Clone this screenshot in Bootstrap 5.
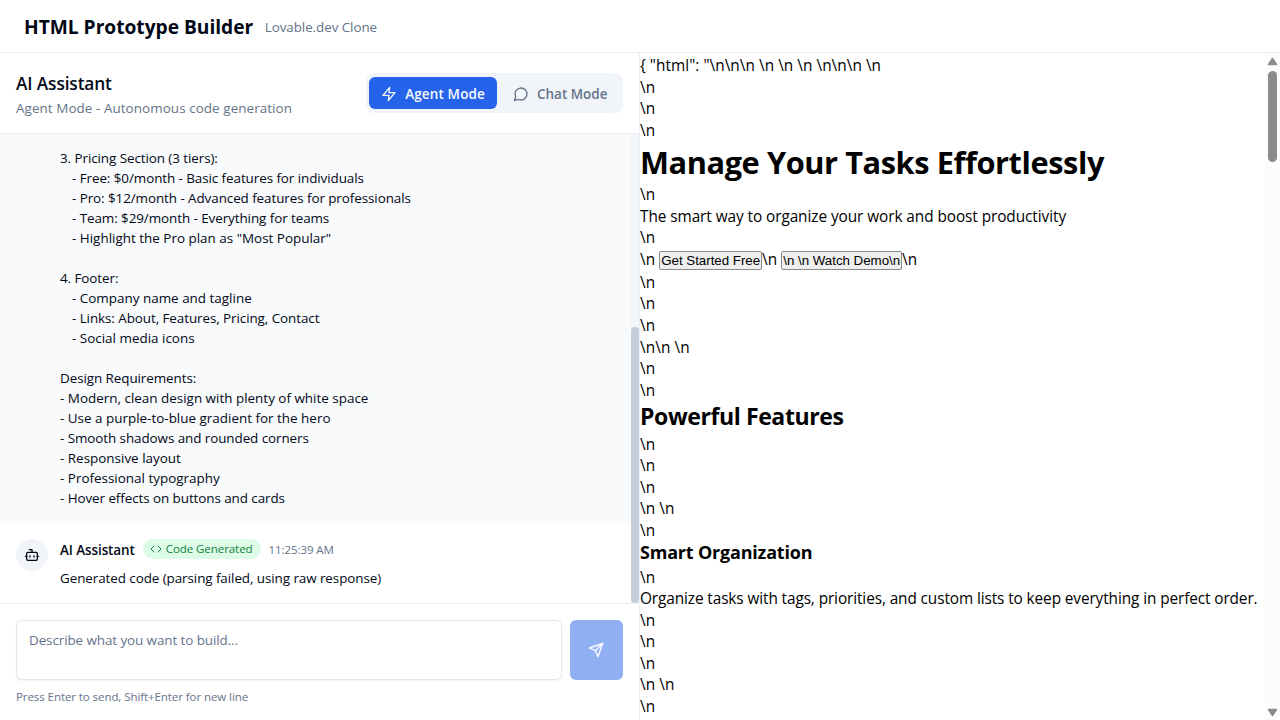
<!DOCTYPE html>
<html lang="en">
<head>
<meta charset="utf-8">
<meta name="viewport" content="width=device-width, initial-scale=1">
<title>HTML Prototype Builder</title>
<link rel="stylesheet" href="https://cdn.jsdelivr.net/npm/bootstrap@5.3.0/dist/css/bootstrap.min.css">
<style>
  :root { --ink:#020817; --muted:#64748b; --line:#e9eef5; --soft:#f1f5f9; --brand:#2563eb; }
  body { font-family:"Open Sans","Noto Sans",sans-serif; font-size:13.44px; line-height:20px; color:var(--ink); letter-spacing:-.08px; }
  svg { fill:none; stroke:currentColor; stroke-width:2; stroke-linecap:round; stroke-linejoin:round; flex:none; display:block; }
  .text-soft { color:var(--muted); }
  .topbar { height:53px; border-bottom:1px solid var(--line); gap:11.5px; padding:1px 24px 0; }
  .topbar h1 { font-size:19.2px; line-height:28px; letter-spacing:-.02px; }
  .chat-pane { width:640px; border-right:1px solid var(--line); }
  .chat-head { height:81px; border-bottom:1px solid var(--line); }
  .chat-head h2 { font-size:17.28px; line-height:28px; letter-spacing:-.12px; padding-top:2px; }
  .chat-head p { letter-spacing:.062px; }
  .mode-switch { background:var(--soft); border-radius:8px; padding:4px 4px 4px 3.5px; gap:4px; }
  .mode-switch .btn { height:32px; padding:1px 11.5px 0 12px; gap:8px; border:0; border-radius:6px; font-size:13.44px; line-height:20px; font-weight:600; color:var(--muted); letter-spacing:.02px; }
  .mode-switch .btn.active { background:var(--brand); color:#f8fafc; letter-spacing:.17px; padding-right:12px; }
  .log { min-height:0; }
  .msg { padding:16px; gap:12px; }
  .msg-user { background:#f8fafc; padding:0 16px 15px 60px; }
  .sub-item { padding-left:12px; }
  .loose { letter-spacing:0; }
  .avatar { width:32px; height:32px; background:var(--soft); }
  .code-tag { background:#dcfce7; color:#15803d; font-size:11.52px; line-height:16px; padding:2px 8px 2px 7.5px; gap:3.5px; height:20px; letter-spacing:-.07px; }
  .nudge { padding-top:1px; margin-bottom:-1px; }
  .tiny { font-size:11.52px; line-height:16px; }
  .track { width:8px; background:var(--soft); }
  .thumb { height:276px; background:#c5cdd8; border-radius:4px; }
  .composer { height:117px; border-top:1px solid var(--line); padding:16px; }
  .composer .hint { margin-top:9px; }
  .composer textarea { height:60px; resize:none; border:1px solid #e2e8f0; border-radius:6px; padding:9px 12px; font-size:13.44px; line-height:20px; letter-spacing:-.09px; box-shadow:0 1px 2px rgba(0,0,0,.05); }
  .composer textarea::placeholder { color:var(--muted); }
  .composer-row { gap:7.5px; }
  .send { width:53.5px; height:60px; background:var(--brand); color:#f8fafc; opacity:.5; border:0; border-radius:6px; padding:0; }
  .preview { font-size:15.36px; line-height:21.54px; color:#000; letter-spacing:-.067px; padding-top:2.1px; white-space:nowrap; }
  .preview h1 { font-size:30.72px; line-height:43px; letter-spacing:-.405px; margin:0; font-weight:700; }
  .preview h2 { font-size:23.04px; line-height:31px; padding-bottom:1.5px; letter-spacing:-.404px; margin:0; font-weight:700; }
  .preview h3 { font-size:17.97px; line-height:22.6px; padding-bottom:2.6px; letter-spacing:-.173px; margin:0; font-weight:700; }
  .preview .nl { letter-spacing:.1px; }
  .cta-row { height:23px; }
  .native { font:13.333px/15px "Liberation Sans",Arial,sans-serif; letter-spacing:-.03px; height:19px; margin-top:2px; padding:0 1px; border:1px solid #8a8a8a; border-radius:2px; background:#efefef; color:#000; white-space:pre; }
  .page-bar { width:15px; background:#fcfcfc; padding:4px 0 3px; }
  .page-thumb { width:9px; height:91px; border-radius:5px; background:#8b8b8b; margin-top:5px; }
</style>
</head>
<body class="vh-100 overflow-hidden d-flex flex-column bg-white">
<header class="topbar d-flex align-items-center flex-shrink-0">
  <h1 class="fw-bold m-0">HTML Prototype Builder</h1>
  <span class="text-soft">Lovable.dev Clone</span>
</header>
<main class="d-flex flex-grow-1 overflow-hidden">
  <section class="chat-pane d-flex flex-column flex-shrink-0">
    <div class="chat-head d-flex align-items-center justify-content-between px-3 flex-shrink-0">
      <div>
        <h2 class="fw-semibold m-0">AI Assistant</h2>
        <p class="text-soft m-0">Agent Mode - Autonomous code generation</p>
      </div>
      <div class="mode-switch d-flex">
        <button class="btn active d-flex align-items-center"><svg width="16" height="16" viewBox="0 0 24 24"><path d="M13 2 3 14h9l-1 8 10-12h-9l1-8z"/></svg>Agent Mode</button>
        <button class="btn d-flex align-items-center"><svg width="16" height="16" viewBox="0 0 24 24"><path d="M7.9 20A9 9 0 1 0 4 16.100L2 22Z"/></svg>Chat Mode</button>
      </div>
    </div>
    <div class="log d-flex flex-grow-1">
      <div class="flex-grow-1 d-flex flex-column justify-content-end overflow-hidden">
        <div class="msg-user flex-grow-1 d-flex flex-column justify-content-end">
          <div>3. Pricing Section (3 tiers):</div>
          <div class="sub-item">- Free: $0/month - Basic features for individuals</div>
          <div class="sub-item">- Pro: $12/month - Advanced features for professionals</div>
          <div class="sub-item">- Team: $29/month - Everything for teams</div>
          <div class="sub-item loose">- Highlight the Pro plan as "Most Popular"</div>
          <div>&nbsp;</div>
          <div>4. Footer:</div>
          <div class="sub-item loose">- Company name and tagline</div>
          <div class="sub-item">- Links: About, Features, Pricing, Contact</div>
          <div class="sub-item loose">- Social media icons</div>
          <div>&nbsp;</div>
          <div>Design Requirements:</div>
          <div class="loose">- Modern, clean design with plenty of white space</div>
          <div class="loose">- Use a purple-to-blue gradient for the hero</div>
          <div>- Smooth shadows and rounded corners</div>
          <div class="loose">- Responsive layout</div>
          <div class="loose">- Professional typography</div>
          <div>- Hover effects on buttons and cards</div>
        </div>
        <div class="msg d-flex flex-shrink-0">
          <div class="avatar rounded-circle d-flex align-items-center justify-content-center flex-shrink-0"><svg width="16" height="16" viewBox="0 0 24 24"><path d="M12 8V4H8"/><rect width="16" height="12" x="4" y="8" rx="2"/><path d="M2 14h2M20 14h2M15 13v2M9 13v2"/></svg></div>
          <div>
            <div class="d-flex align-items-center gap-2 mb-2">
              <span class="fw-semibold nudge">AI Assistant</span>
              <span class="code-tag rounded-pill d-flex align-items-center"><svg width="12" height="12" viewBox="0 0 24 24"><path d="m16 18 6-6-6-6M8 6l-6 6 6 6"/></svg>Code Generated</span>
              <span class="tiny text-soft nudge">11:25:39 AM</span>
            </div>
            <div class="nudge">Generated code (parsing failed, using raw response)</div>
          </div>
        </div>
      </div>
      <div class="track d-flex flex-column justify-content-end flex-shrink-0"><div class="thumb"></div></div>
    </div>
    <div class="composer flex-shrink-0">
      <div class="composer-row d-flex">
        <textarea class="form-control" placeholder="Describe what you want to build..."></textarea>
        <button class="send btn d-flex align-items-center justify-content-center flex-shrink-0" aria-label="Send"><svg width="16" height="16" viewBox="0 0 24 24"><path d="m22 2-7 20-4-9-9-4Z"/><path d="M22 2 11 13"/></svg></button>
      </div>
      <p class="hint tiny text-soft mb-0">Press Enter to send, Shift+Enter for new line</p>
    </div>
  </section>
  <section class="preview flex-grow-1 overflow-hidden">
    <div style="letter-spacing:.04px">{ "html": "\n\n\n \n \n \n \n\n\n \n</div>
    <div class="nl">\n</div><div class="nl">\n</div><div class="nl">\n</div>
    <h1>Manage Your Tasks Effortlessly</h1>
    <div class="nl">\n</div>
    <div>The smart way to organize your work and boost productivity</div>
    <div class="nl">\n</div>
    <div class="cta-row nl d-flex align-items-start"><span class="me-1">\n</span><button class="native">Get Started Free</button><span class="me-1">\n</span><button class="native">\n \n Watch Demo\n</button><span>\n</span></div>
    <div class="nl">\n</div><div class="nl">\n</div><div class="nl">\n</div>
    <div class="nl">\n\n \n</div>
    <div class="nl">\n</div><div class="nl">\n</div>
    <h2>Powerful Features</h2>
    <div class="nl">\n</div><div class="nl">\n</div><div class="nl">\n</div>
    <div class="nl">\n \n</div>
    <div class="nl">\n</div>
    <h3>Smart Organization</h3>
    <div class="nl">\n</div>
    <div style="letter-spacing:-.099px">Organize tasks with tags, priorities, and custom lists to keep everything in perfect order.</div>
    <div class="nl">\n</div><div class="nl">\n</div><div class="nl">\n</div>
    <div class="nl">\n \n</div>
    <div class="nl">\n</div>
  </section>
  <div class="page-bar d-flex flex-column align-items-center flex-shrink-0">
    <svg width="11" height="9" viewBox="0 0 11 9"><path d="M5.500 1.500 9.500 7.500h-8z" fill="#8b8b8b" stroke="#8b8b8b" stroke-width="1.500"/></svg>
    <div class="page-thumb"></div>
    <svg class="mt-auto" width="11" height="9" viewBox="0 0 11 9"><path d="M5.500 7.500 1.500 1.500h8z" fill="#8b8b8b" stroke="#8b8b8b" stroke-width="1.500"/></svg>
  </div>
</main>
<script src="https://cdn.jsdelivr.net/npm/bootstrap@5.3.0/dist/js/bootstrap.bundle.min.js"></script>
</body>
</html>
